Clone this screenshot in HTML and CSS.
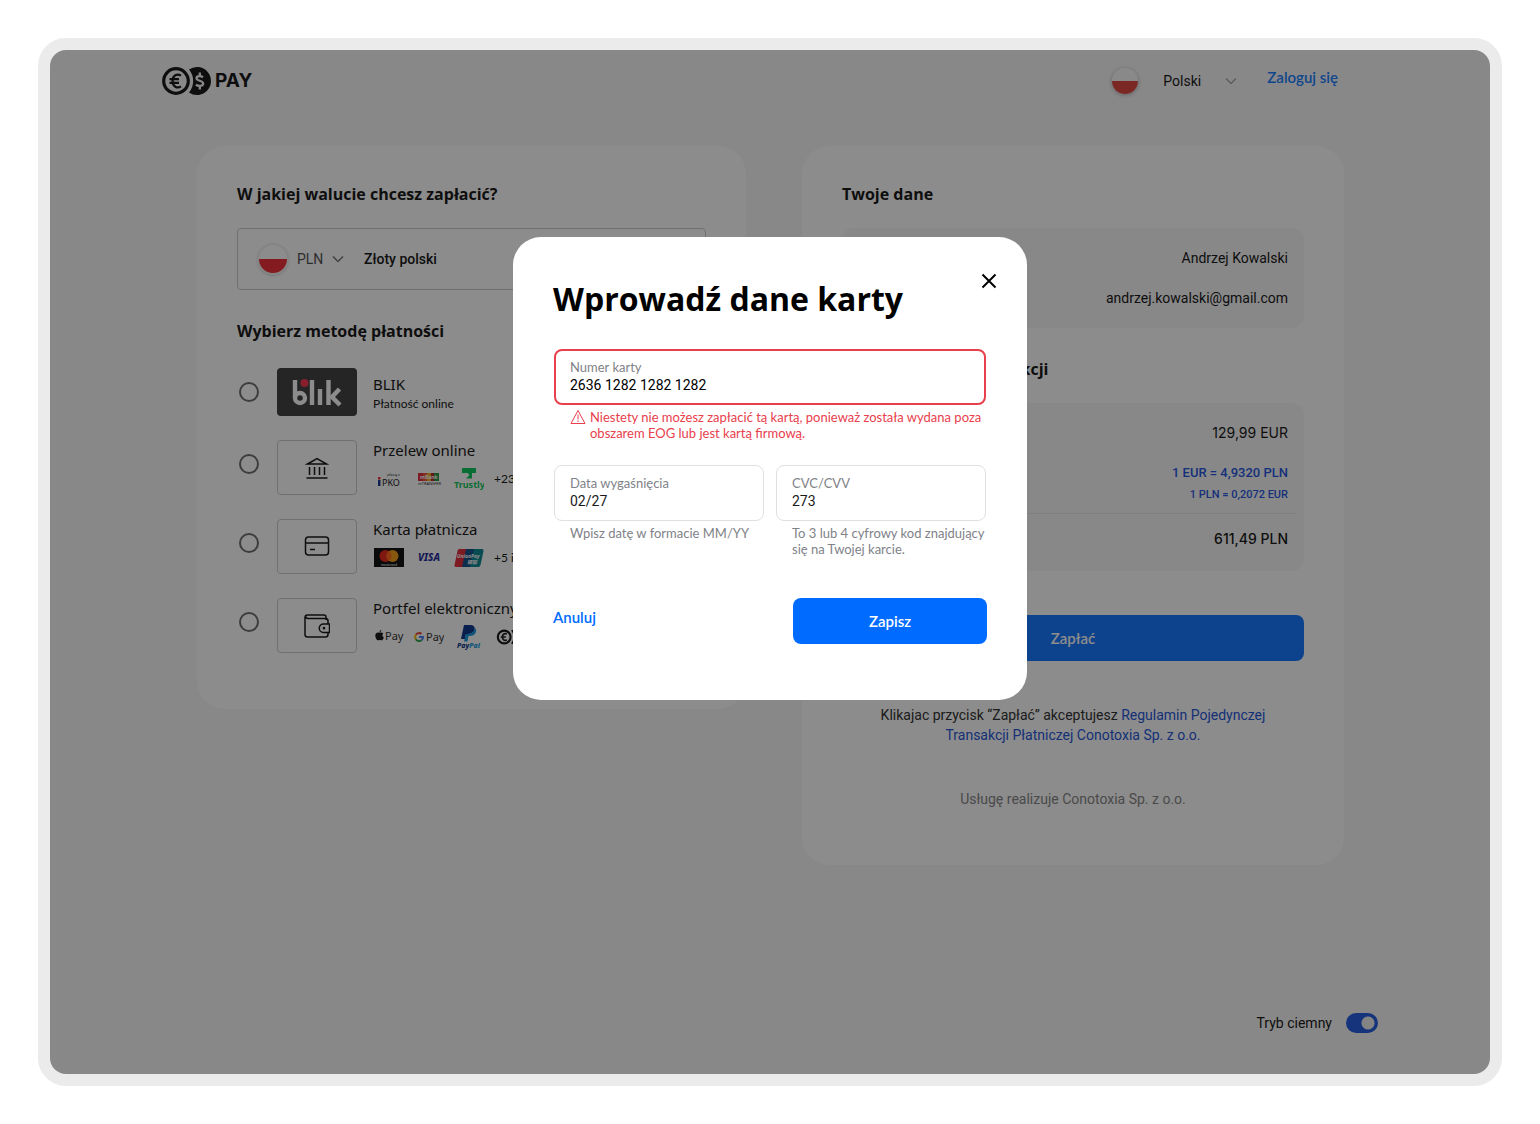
FILE: index.html
```html
<!DOCTYPE html>
<html lang="pl">
<head>
  <meta charset="UTF-8">
  <meta name="viewport" content="width=device-width, initial-scale=1">
  <title>Conotoxia Pay</title>
  <link rel="stylesheet" href="styles.css">
</head>
<body>
  <div class="page">
    <header class="header">
      <a class="logo" href="#" aria-label="Conotoxia Pay">
        <svg width="50" height="30" viewBox="0 0 50 30">
          <circle cx="14" cy="15" r="12.3" fill="none" stroke="#1a1a1a" stroke-width="3.2"/>
          <path d="M27 3.5A14 14 0 1 1 27 26.5A18 18 0 0 0 27 3.5Z" fill="#1a1a1a"/>
          <path d="M19 9.6C15 7.2 10.6 9.3 10.6 15S15 22.8 19 20.4M7.5 13.2H17M7.5 16.8H17" fill="none" stroke="#1a1a1a" stroke-width="2.2"/>
          <path d="M41 11.3C38.5 9.6 34.5 9.9 34.5 12.3C34.5 15.3 41.2 14.2 41.2 17.6C41.2 20.4 36.6 20.6 33.9 18.7M37.8 6.6V10M37.8 20V23.4" fill="none" stroke="#f8f8f8" stroke-width="2.3"/>
        </svg>
        <span>PAY</span>
      </a>
      <div class="header-right">
        <span class="flag flag-lang"></span>
        <span class="dropdown dropdown-lang">
          <select aria-label="Język">
            <option>Polski</option>
          </select>
          <svg width="12" height="8" viewBox="0 0 12 8"><path d="M1 1.5L6 6.5L11 1.5"/></svg>
        </span>
        <a class="login" href="#">Zaloguj się</a>
      </div>
    </header>

    <main class="main">
      <section class="card">
        <h2>W jakiej walucie chcesz zapłacić?</h2>
        <div class="currency">
          <span class="flag flag-currency"></span>
          <span class="dropdown dropdown-currency">
            <select aria-label="Waluta">
              <option>PLN</option>
            </select>
            <svg width="12" height="8" viewBox="0 0 12 8"><path d="M1 1.5L6 6.5L11 1.5"/></svg>
          </span>
          <span class="currency-name">Złoty polski</span>
        </div>

        <h2>Wybierz metodę płatności</h2>
        <div class="methods">
          <label class="method">
            <input type="radio" name="method">
            <span class="tile tile-blik">
              <svg width="52" height="30" viewBox="0 0 52 30">
                <path d="M4 3V21"/>
                <circle cx="9" cy="21" r="5"/>
                <path d="M21 3V28M29 12V28M37.5 3V28"/>
                <path d="M48.5 12L41 20L49 28"/>
                <circle class="blik-dot" cx="13.5" cy="6" r="4"/>
              </svg>
            </span>
            <span class="method-text method-text-blik">
              <span class="method-name">BLIK</span>
              <span class="method-sub">Płatność online</span>
            </span>
          </label>

          <label class="method">
            <input type="radio" name="method">
            <span class="tile">
              <svg width="24" height="24" viewBox="0 0 24 24">
                <path d="M2.5 8L12 2.5L21.5 8ZM4.5 11V19M9.5 11V19M14.5 11V19M19.5 11V19M1.5 22H22.5"/>
              </svg>
            </span>
            <span class="method-text">
              <span class="method-name">Przelew online</span>
              <span class="brands">
                <svg width="30" height="24" viewBox="0 0 30 24">
                  <text class="svg-tiny" x="13" y="9">płacę z</text>
                  <path d="M4 13H6.5V19H4Z" fill="#1c3f94"/>
                  <path d="M4 10H6.5V12.5H4Z" fill="#e33"/>
                  <text class="svg-ipko" x="8" y="19">PKO</text>
                </svg>
                <svg width="30" height="24" viewBox="0 0 30 24">
                  <path d="M4 6H9V14H4Z" fill="#e2343f"/>
                  <path d="M9 6H13V14H9Z" fill="#f0563a"/>
                  <path d="M13 6H17V14H13Z" fill="#f5b02c"/>
                  <path d="M17 6H20V14H17Z" fill="#c02a2a"/>
                  <path d="M20 6H25V14H20Z" fill="#2f9a48"/>
                  <text class="svg-mbank" x="6" y="12">mBank</text>
                  <text class="svg-transfer" x="4" y="18">mTRANSFER</text>
                </svg>
                <svg width="30" height="24" viewBox="0 0 30 24">
                  <path d="M8 1H22V6H18V11.5H12L15.5 8L13 5.5V6H8Z" fill="#12c860"/>
                  <text class="svg-trustly" x="0" y="21">Trustly</text>
                </svg>
                <span class="more">+23 inne</span>
              </span>
            </span>
          </label>

          <label class="method">
            <input type="radio" name="method">
            <span class="tile">
              <svg width="26" height="24" viewBox="0 0 26 24">
                <rect x="1.5" y="2" width="23" height="18" rx="3"/>
                <path d="M1.5 8H24.5M6 14.5H11"/>
              </svg>
            </span>
            <span class="method-text">
              <span class="method-name">Karta płatnicza</span>
              <span class="brands">
                <svg width="30" height="24" viewBox="0 0 30 24">
                  <path d="M0 2H30V21H0Z" fill="#141414"/>
                  <circle cx="11.5" cy="10" r="6" fill="#eb2a20"/>
                  <circle cx="18.5" cy="10" r="6" fill="#f79e1b"/>
                  <path d="M15 5.1A6 6 0 0 1 15 14.9A6 6 0 0 1 15 5.1Z" fill="#ff6a1a"/>
                  <text class="svg-mc" x="7" y="19.5">mastercard</text>
                </svg>
                <svg width="30" height="24" viewBox="0 0 30 24">
                  <text class="svg-visa" x="4" y="15">VISA</text>
                </svg>
                <svg width="30" height="24" viewBox="0 0 30 24">
                  <path d="M5 3H14L10 21H2Q0 21 .5 19L3.5 5Q4 3 5 3Z" fill="#e5303c"/>
                  <path d="M12 3H22L18 21H8Z" fill="#17538a"/>
                  <path d="M20 3H28Q30 3 29.5 5L26.5 19Q26 21 24.5 21H16Z" fill="#0b8a94"/>
                  <text class="svg-union" x="3" y="12">UnionPay</text>
                  <text class="svg-union" x="13" y="18">银联</text>
                </svg>
                <span class="more">+5 innych</span>
              </span>
            </span>
          </label>

          <label class="method">
            <input type="radio" name="method">
            <span class="tile">
              <svg width="26" height="26" viewBox="0 0 26 26">
                <path d="M22 7V4Q22 2 20 2H3.5Q1 2 1 4.5V21.5Q1 24 3.5 24H21.5Q24 24 24 21.5V20M1.5 3.5Q2 5.5 4 5.5H21.5Q24 5.5 24 8V11"/>
                <path d="M25.5 11H19.5A4.2 4.2 0 0 0 19.5 19.5H25.5Z"/>
                <circle cx="20" cy="15.2" r=".6"/>
              </svg>
            </span>
            <span class="method-text">
              <span class="method-name">Portfel elektroniczny</span>
              <span class="brands">
                <svg width="30" height="24" viewBox="0 0 30 24">
                  <path d="M7.4 5C7.2 6.5 6 7.3 5.5 7.2C5.5 5.8 6.5 5.1 7.4 5ZM9.3 8.5C7.9 9.4 8 11.7 9.8 12.4C9.4 13.8 8.4 15.3 7.5 15.3C6.8 15.3 6.6 14.9 5.8 14.9S4.7 15.3 4.1 15.3C2.8 15.3 1.3 12.7 1.3 10.7C1.3 7.5 4 6.8 5.7 7.8C6.8 7.2 8.4 7.3 9.3 8.5Z" fill="#1a1a1a"/>
                  <text class="svg-pay" x="11" y="15">Pay</text>
                </svg>
                <svg width="30" height="24" viewBox="0 0 30 24" fill="none" stroke-width="2">
                  <path d="M2 9.6A4 4 0 0 1 7.5 8.9" stroke="#e94235"/>
                  <path d="M2 9.5A4.5 4.5 0 0 0 2 14.5" stroke="#fabb05"/>
                  <path d="M1.8 14.2A4 4 0 0 0 7.6 15.2" stroke="#34a853"/>
                  <path d="M5 12H9A4 4 0 0 1 7.5 15.3" stroke="#4285f4"/>
                  <text class="svg-pay" x="12" y="16">Pay</text>
                </svg>
                <svg width="30" height="26" viewBox="0 0 30 26">
                  <path d="M10 1H17Q21.5 1.5 20.5 6Q19 10 14 10H12L11 15H7Z" fill="#123a8c"/>
                  <path d="M21 4Q23 6 21.5 9Q20 12 16 12H14.5L13.5 17.5H10L12 10H14Q19.5 10 21 4Z" fill="#1a9be0"/>
                  <text class="svg-paypal" x="3" y="24"><tspan fill="#123a8c">Pay</tspan><tspan fill="#1a9be0">Pal</tspan></text>
                </svg>
                <svg width="30" height="16" viewBox="-4 0 54 30">
                  <circle cx="14" cy="15" r="12" fill="none" stroke="#1a1a1a" stroke-width="4"/>
                  <path d="M27 3A14 14 0 1 1 27 27A18 18 0 0 0 27 3Z" fill="#1a1a1a"/>
                  <path d="M19 9.6C15 7.2 10.6 9.3 10.6 15S15 22.8 19 20.4M7.5 15H17" fill="none" stroke="#1a1a1a" stroke-width="3"/>
                </svg>
              </span>
            </span>
          </label>
        </div>
      </section>

      <section class="card">
        <h2>Twoje dane</h2>
        <div class="box">
          <p>Andrzej Kowalski</p>
          <p>andrzej.kowalski@gmail.com</p>
        </div>

        <h2>Podsumowanie transakcji</h2>
        <div class="box box-summary">
          <p class="amount">129,99 EUR</p>
          <div class="rates">
            <p class="rate">1 EUR = 4,9320 PLN</p>
            <p class="rate rate-small">1 PLN = 0,2072 EUR</p>
          </div>
          <p class="amount amount-total">611,49 PLN</p>
        </div>

        <button class="btn btn-pay" type="button">Zapłać</button>
        <p class="terms">Klikajac przycisk “Zapłać” akceptujesz <a href="#">Regulamin Pojedynczej Transakcji Płatniczej Conotoxia Sp. z o.o.</a></p>
        <p class="provider">Usługę realizuje Conotoxia Sp. z o.o.</p>
      </section>
    </main>

    <footer class="footer">
      <label for="darkMode">Tryb ciemny</label>
      <input class="switch" type="checkbox" id="darkMode" checked>
    </footer>

    <div class="overlay">
      <form class="modal" role="dialog" aria-labelledby="modalTitle">
        <button class="close" type="button" aria-label="Zamknij">
          <svg width="16" height="16" viewBox="0 0 16 16"><path d="M1.5 1.5L14.5 14.5M14.5 1.5L1.5 14.5"/></svg>
        </button>
        <h1 id="modalTitle">Wprowadź dane karty</h1>

        <div class="fields">
          <div class="field-group field-wide">
            <div class="field field-error">
              <label for="cardNumber">Numer karty</label>
              <input type="text" id="cardNumber" value="2636 1282 1282 1282">
            </div>
            <p class="error">
              <svg width="16" height="16" viewBox="0 0 16 16"><path d="M8 1.5L15 14.5H1ZM8 5.5V10.5M8 11.5V13"/></svg>
              <span>Niestety nie możesz zapłacić tą kartą, ponieważ została wydana poza obszarem EOG lub jest kartą firmową.</span>
            </p>
          </div>
          <div class="field-group">
            <div class="field">
              <label for="expiry">Data wygaśnięcia</label>
              <input type="text" id="expiry" value="02/27">
            </div>
            <p class="hint">Wpisz datę w formacie MM/YY</p>
          </div>
          <div class="field-group">
            <div class="field">
              <label for="cvc">CVC/CVV</label>
              <input type="text" id="cvc" value="273">
            </div>
            <p class="hint">To 3 lub 4 cyfrowy kod znajdujący się na Twojej karcie.</p>
          </div>
        </div>

        <div class="actions">
          <button class="cancel" type="button">Anuluj</button>
          <button class="btn btn-save" type="submit">Zapisz</button>
        </div>
      </form>
    </div>
  </div>
</body>
</html>
```
FILE: styles.css
```css
* {
  box-sizing: border-box;
}
body {
  margin: 0;
  padding: 38px;
  background: #fff;
  font-family: Roboto, sans-serif;
  font-size: 14px;
  line-height: 20px;
  color: #1a1a1a;
}
h1, h2, p {
  margin: 0;
}
a {
  text-decoration: none;
}
button, input, select {
  font: inherit;
  color: inherit;
  margin: 0;
}
button {
  border: none;
  background: none;
  padding: 0;
  cursor: pointer;
}

.page {
  position: relative;
  display: flex;
  flex-direction: column;
  min-height: calc(100vh - 76px);
  border: 12px solid #ebebeb;
  border-radius: 28px;
  background: #f8f8f8;
}

/* header */
.header {
  display: flex;
  justify-content: space-between;
  padding: 16px 152px 50px 112px;
}
.logo {
  display: flex;
  align-items: center;
  gap: 3px;
  height: 30px;
  font-family: Inter, sans-serif;
  font-size: 19px;
  font-weight: 700;
  color: #1a1a1a;
}
.header-right {
  display: flex;
  align-items: center;
  height: 30px;
}
.flag {
  border-radius: 50%;
  box-shadow: 0 1px 4px rgba(0, 0, 0, 0.3);
}
.flag-lang {
  width: 26px;
  height: 26px;
  margin-right: 25px;
  background: linear-gradient(#fafafa 50%, #e04a44 50%);
}
.flag-currency {
  width: 32px;
  height: 32px;
  margin-right: 8px;
  border: 2px solid #f0f0f0;
  background: linear-gradient(#fff 50%, #ef323b 50%);
  box-shadow: 0 1px 2px rgba(0, 0, 0, 0.15);
}
.dropdown {
  position: relative;
}
.dropdown select {
  appearance: none;
  border: none;
  background: none;
  padding: 0;
  width: 100%;
}
.dropdown svg {
  position: absolute;
  right: 0;
  top: 6px;
  fill: none;
  stroke: #777;
  stroke-width: 1.5;
  pointer-events: none;
}
.dropdown-lang {
  width: 74px;
  margin-right: 30px;
}
.dropdown-lang svg {
  stroke: #aaa;
}
.dropdown-currency {
  width: 47px;
  margin-right: 20px;
  color: #555;
}
.login {
  align-self: flex-start;
  font-family: Lato, sans-serif;
  font-size: 15px;
  font-weight: 600;
  line-height: 22px;
  color: #2080ff;
}

/* cards */
.main {
  display: grid;
  grid-template-columns: 549fr 542fr;
  gap: 56px;
  align-items: start;
  padding: 0 146px 0 147px;
}
.card {
  padding: 36px 40px 56px;
  border-radius: 28px;
  background: #fff;
}
.card h2 {
  margin: 29px 0 22px;
  font-family: "Open Sans", sans-serif;
  font-size: 16px;
  font-weight: 700;
  line-height: 24px;
}
.card h2:first-child {
  margin-top: 0;
}
.currency {
  display: flex;
  align-items: center;
  height: 62px;
  padding: 0 19px;
  border: 1px solid #ccc;
  border-radius: 4px;
}
.currency-name {
  font-weight: 500;
}

.methods {
  display: flex;
  flex-direction: column;
  gap: 24px;
  padding: 3px 0 0 2px;
}
.method {
  display: flex;
  align-items: flex-start;
}
.method input {
  appearance: none;
  flex: none;
  width: 20px;
  height: 20px;
  margin: 14px 18px 0 0;
  border: 2px solid #707070;
  border-radius: 50%;
}
.tile {
  display: flex;
  flex: none;
  align-items: center;
  justify-content: center;
  width: 80px;
  height: 55px;
  margin-right: 16px;
  border: 1px solid #ccc;
  border-radius: 4px;
}
.tile svg {
  fill: none;
  stroke: #1a1a1a;
  stroke-width: 1.5;
}
.tile-blik {
  height: 48px;
  border: none;
  background: #444;
}
.tile-blik svg {
  stroke: #fff;
  stroke-width: 4.4;
}
.tile-blik .blik-dot {
  fill: #fa3a55;
  stroke: none;
}
.method-text {
  display: flex;
  flex-direction: column;
  white-space: nowrap;
}
.method-text-blik {
  padding-top: 6px;
}
.method-name {
  font-family: "Noto Sans", sans-serif;
  font-size: 15px;
}
.method-sub {
  font-family: Lato, sans-serif;
  font-size: 12px;
}
.brands {
  display: flex;
  align-items: center;
  gap: 10px;
  height: 32px;
  margin-top: 3px;
  padding-left: 1px;
}
.more {
  font-family: Lato, sans-serif;
  font-size: 12px;
}

/* brand marks */
.brands text {
  font-family: "Noto Sans", "Noto Sans CJK SC", sans-serif;
  stroke: none;
}
.svg-tiny { font-size: 4px; fill: #333; }
.svg-ipko { font-size: 9px; fill: #1a1a1a; }
.svg-mbank { font-size: 5px; font-weight: 700; fill: #fff; }
.svg-transfer { font-size: 4px; fill: #333; }
.svg-trustly { font-size: 9px; font-weight: 700; fill: #12c860; }
.svg-mc { font-size: 3px; fill: #fff; }
.svg-visa { font-size: 10px; font-weight: 800; font-style: italic; fill: #2a2f9c; }
.svg-union { font-size: 5px; font-weight: 700; font-style: italic; fill: #fff; }
.svg-pay { font-size: 11px; fill: #333; }
.svg-paypal { font-size: 7px; font-weight: 800; font-style: italic; }

/* summary */
.box {
  padding: 20px 16px;
  border-radius: 12px;
  background: #f8f8f8;
  text-align: right;
}
.box-summary {
  padding-bottom: 22px;
}
.box p + p {
  margin-top: 20px;
}
.amount {
  font-family: Inter, sans-serif;
}
.amount-total {
  font-weight: 500;
}
.rates {
  margin: 20px -8px 15px;
  padding: 0 8px 8px;
  border-bottom: 1px solid #e8e8e8;
}
.rate {
  font-size: 13px;
  font-weight: 500;
  color: #2858e0;
}
.rates .rate-small {
  margin-top: 2px;
  font-size: 11px;
}

.btn {
  height: 46px;
  border-radius: 8px;
  font-family: Lato, sans-serif;
  font-size: 15px;
  font-weight: 600;
  color: #fff;
}
.btn-pay {
  width: 100%;
  margin-top: 44px;
  background: #1878ff;
}
.terms {
  max-width: 420px;
  margin: 44px auto;
  text-align: center;
  color: #333;
}
.terms a {
  color: #2858d8;
}
.provider {
  text-align: center;
  color: #888;
}

.footer {
  display: flex;
  align-items: center;
  justify-content: flex-end;
  gap: 14px;
  margin-top: auto;
  padding: 40px 112px 41px;
}
.switch {
  appearance: none;
  width: 32px;
  height: 20px;
  border-radius: 10px;
  background: radial-gradient(circle at 22px 10px, #f0f0f0 6px, #2860e0 7px);
}

/* modal */
.overlay {
  position: absolute;
  inset: 0;
  display: flex;
  align-items: flex-start;
  justify-content: center;
  padding-top: 187px;
  border-radius: 16px;
  background: rgba(0, 0, 0, 0.45);
}
.modal {
  position: relative;
  width: 514px;
  padding: 42px 40px 56px;
  border-radius: 28px;
  background: #fff;
}
.close {
  position: absolute;
  top: 36px;
  right: 30px;
  width: 16px;
  height: 16px;
}
.close svg {
  display: block;
  fill: none;
  stroke: #000;
  stroke-width: 2;
}
.modal h1 {
  margin-bottom: 30px;
  font-family: "Open Sans", sans-serif;
  font-size: 32px;
  font-weight: 700;
  line-height: 40px;
  color: #000;
}
.fields {
  display: grid;
  grid-template-columns: 1fr 1fr;
  gap: 24px 12px;
  padding: 0 1px;
}
.field-wide {
  grid-column: span 2;
}
.field {
  display: flex;
  flex-direction: column;
  justify-content: center;
  height: 56px;
  padding: 0 15px 2px;
  border: 1px solid #e0e0e0;
  border-radius: 8px;
}
.field-error {
  padding: 0 14px 2px;
  border: 2px solid #e8404c;
}
.field label {
  font-family: Lato, sans-serif;
  font-size: 13px;
  line-height: 18px;
  color: #808288;
}
.field input {
  width: 100%;
  height: 18px;
  padding: 0;
  border: none;
  outline: none;
  background: none;
  line-height: 18px;
}
.field-error input {
  color: #000;
}
.error, .hint {
  margin-top: 4px;
  padding-left: 16px;
  font-family: Lato, sans-serif;
  font-size: 13px;
  line-height: 16px;
  color: #808288;
}
.error {
  display: flex;
  gap: 4px;
  color: #e8404c;
}
.error svg {
  flex: none;
  fill: none;
  stroke: #e8404c;
  stroke-linejoin: round;
}
.actions {
  display: flex;
  align-items: flex-start;
  justify-content: space-between;
  margin-top: 41px;
}
.cancel {
  margin-top: 8px;
  font-family: Lato, sans-serif;
  font-size: 15px;
  font-weight: 600;
  line-height: 22px;
  color: #006cff;
}
.btn-save {
  width: 194px;
  background: #006cff;
}
```
